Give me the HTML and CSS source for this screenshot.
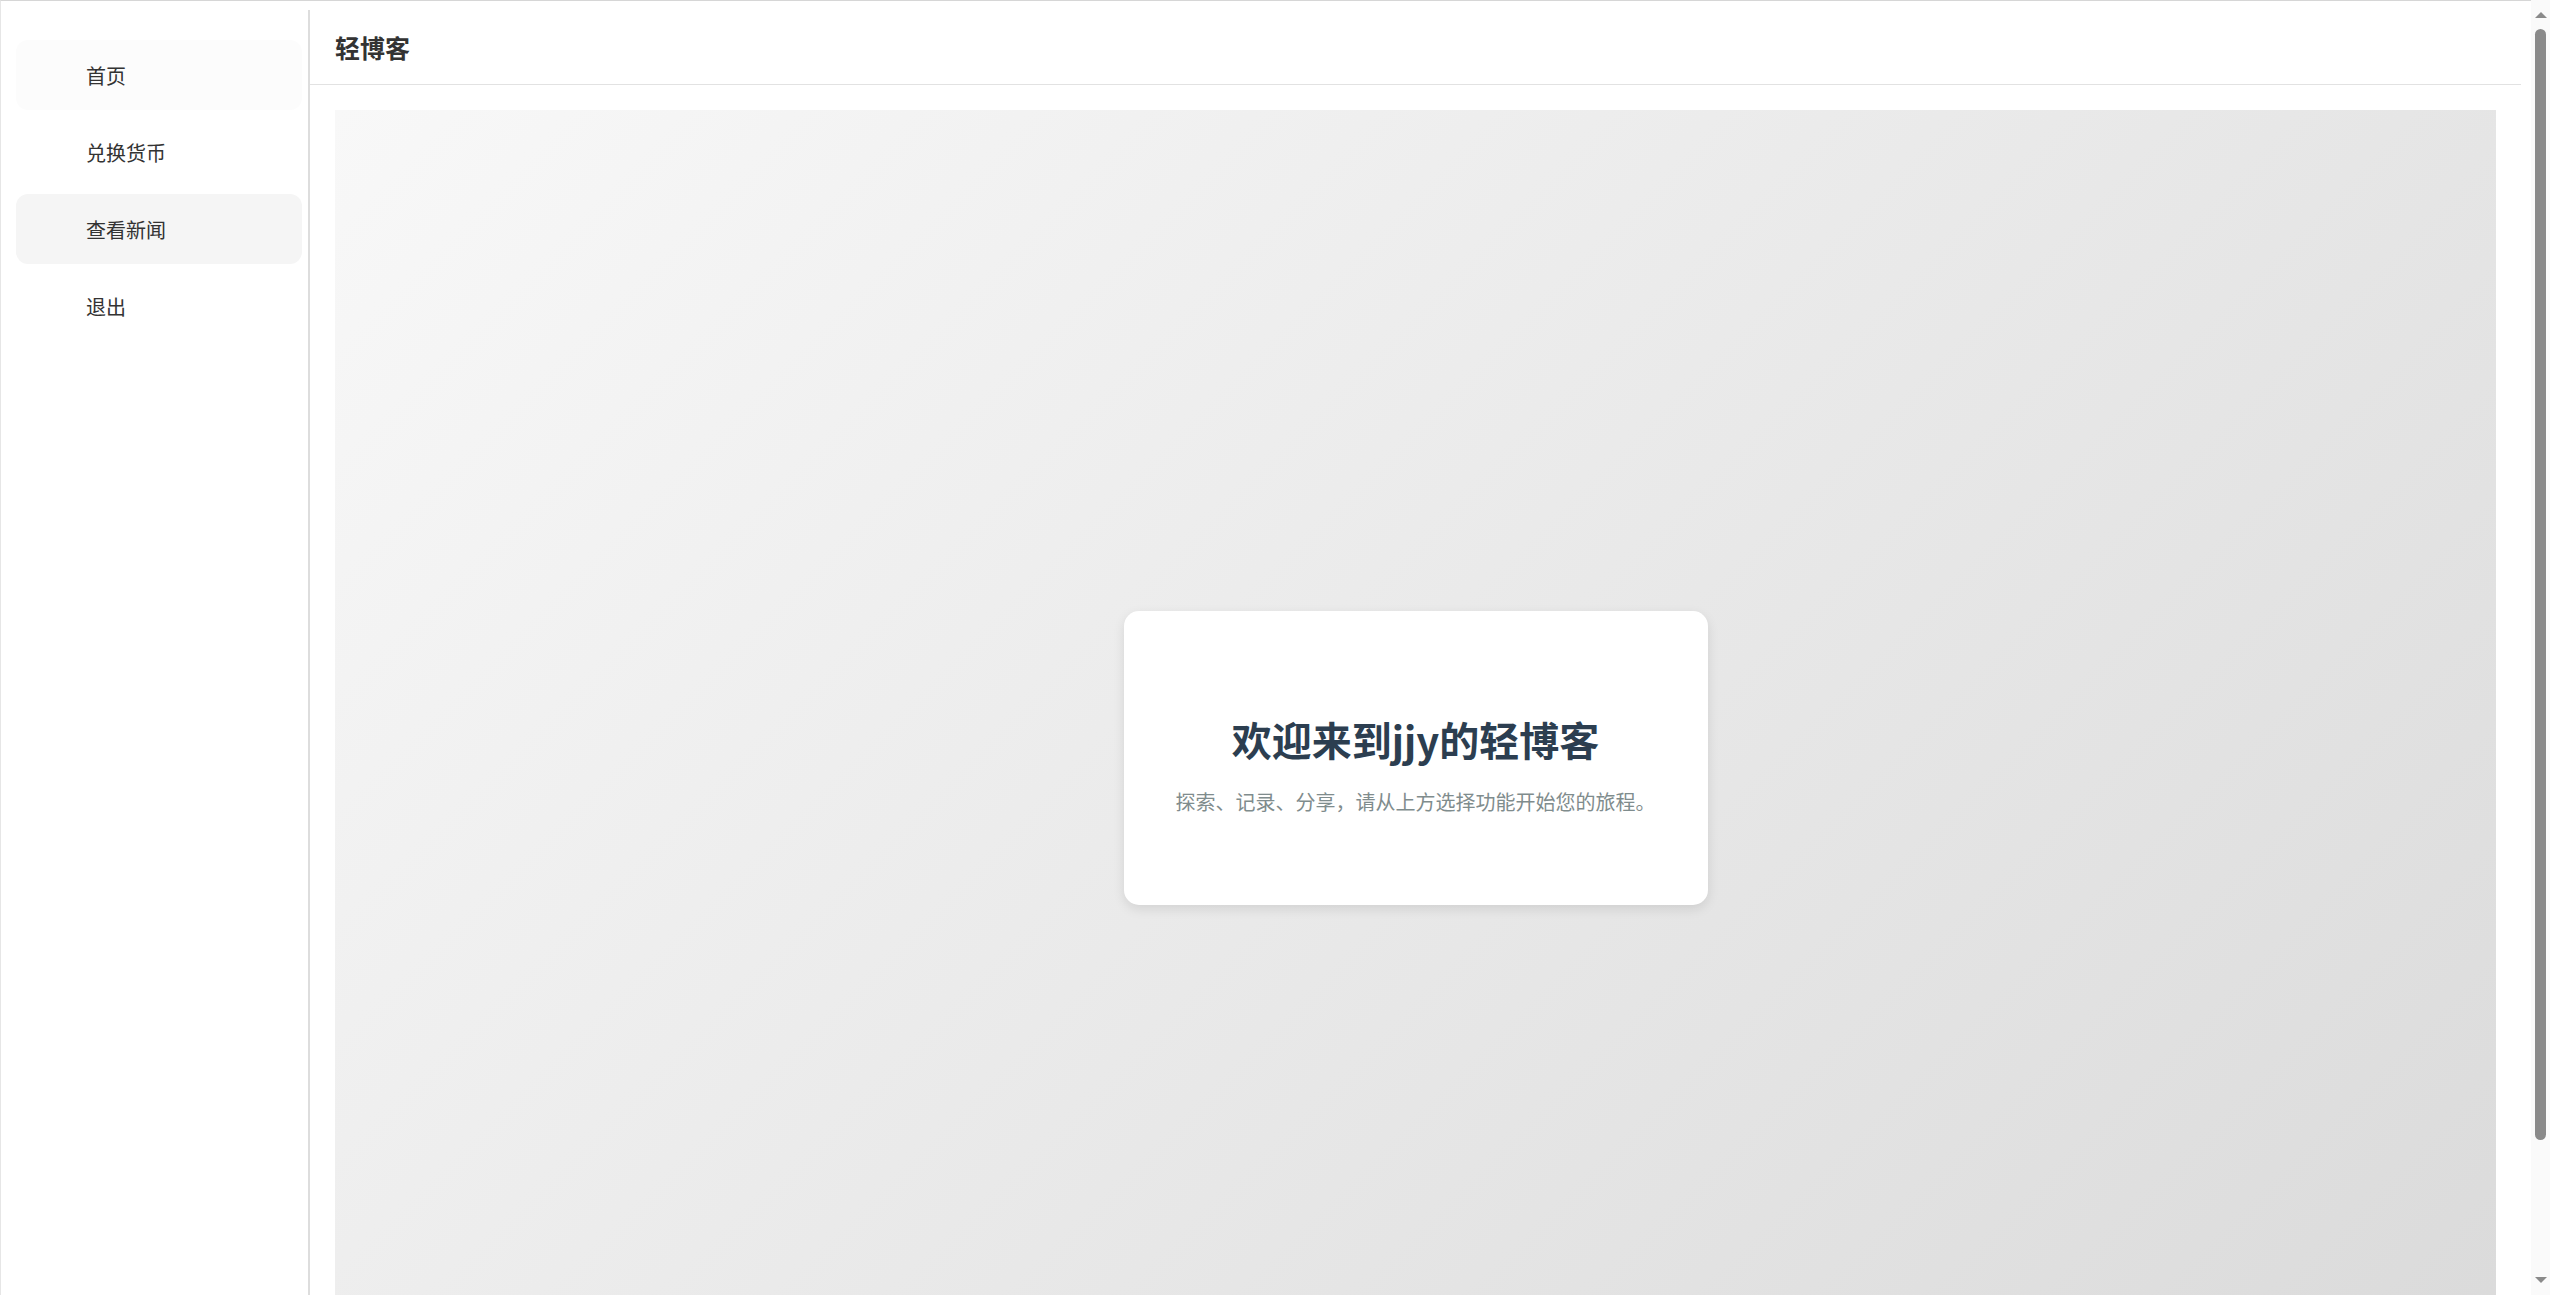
FILE: index.html
```html
<!DOCTYPE html>
<html lang="zh-CN">
<head>
<meta charset="utf-8">
<title>轻博客</title>
<link rel="stylesheet" href="styles.css">
</head>
<body>
<div class="app">
  <aside class="sidebar">
    <nav class="menu">
      <a class="menu-item menu-item--hover">首页</a>
      <a class="menu-item">兑换货币</a>
      <a class="menu-item menu-item--active">查看新闻</a>
      <a class="menu-item">退出</a>
    </nav>
  </aside>
  <main class="main">
    <header class="header">轻博客</header>
    <section class="hero">
      <div class="card">
        <h1 class="card-title">欢迎来到jjy的轻博客</h1>
        <p class="card-text">探索、记录、分享，请从上方选择功能开始您的旅程。</p>
      </div>
    </section>
  </main>
</div>
<div class="scrollbar" aria-hidden="true">
  <span class="sb-arrow sb-arrow--up"></span>
  <div class="sb-track"><div class="sb-thumb"></div></div>
  <span class="sb-arrow sb-arrow--down"></span>
</div>
</body>
</html>
```

FILE: styles.css
```css
html {
  overflow: hidden;
}

html, body {
  margin: 0;
  padding: 0;
}

body {
  background: #ffffff;
  font-family: "Noto Sans CJK SC", "Noto Sans", sans-serif;
  color: #333333;
  border-top: 1px solid #d6d6d6;
  border-left: 1px solid #e6e6e6;
}

.app {
  display: flex;
  padding: 9px 29px 0 0;
}

.sidebar {
  flex: 0 0 309px;
  width: 309px;
  box-sizing: border-box;
  border-right: 2px solid #dddddd;
  padding: 30px 6px 0 15px;
}

.menu {
  display: flex;
  flex-direction: column;
  gap: 7px;
}

.menu-item {
  display: flex;
  align-items: center;
  height: 70px;
  padding-left: 70px;
  border-radius: 12px;
  font-size: 20px;
  color: #333333;
  text-decoration: none;
}

.menu-item--hover {
  background: #fcfcfc;
}

.menu-item--active {
  background: #f5f5f5;
}

.main {
  flex: 1;
  min-width: 0;
  padding-bottom: 25px;
}

.header {
  height: 74px;
  display: flex;
  align-items: center;
  padding: 0 25px;
  border-bottom: 1px solid #e2e2e2;
  font-size: 25px;
  font-weight: 700;
  color: #333333;
}

.hero {
  margin: 25px 25px 25px;
  min-height: 100vh;
  box-sizing: border-box;
  display: flex;
  align-items: center;
  justify-content: center;
  background: linear-gradient(135deg, #f8f8f8 0%, #dadada 100%);
}

.card {
  padding: 104px 52px 88px;
  background: #ffffff;
  border-radius: 15px;
  box-shadow: 0 4px 12px rgba(0, 0, 0, 0.1);
  text-align: center;
}

.card-title {
  margin: 0 0 24px;
  font-size: 40px;
  line-height: 48px;
  font-weight: 700;
  color: #2c3e50;
}

.card-text {
  margin: 0;
  font-size: 20px;
  line-height: 30px;
  color: #7f8c8d;
  white-space: nowrap;
}

/* window scrollbar drawn over the right edge */
.scrollbar {
  position: fixed;
  top: 0;
  right: 0;
  bottom: 0;
  width: 19px;
  box-sizing: border-box;
  padding: 12px 0;
  background: #fafafa;
  display: flex;
  flex-direction: column;
  align-items: center;
}

.sb-arrow {
  width: 0;
  height: 0;
  border-left: 6.5px solid transparent;
  border-right: 6.5px solid transparent;
}

.sb-arrow--up {
  border-bottom: 6px solid #8a8a8a;
}

.sb-arrow--down {
  border-top: 6px solid #8a8a8a;
}

.sb-track {
  flex: 1;
  align-self: stretch;
  display: flex;
  justify-content: center;
}

.sb-thumb {
  margin-top: 11px;
  width: 11px;
  height: 1111px;
  border-radius: 6px;
  background: #8a8a8a;
}
```
